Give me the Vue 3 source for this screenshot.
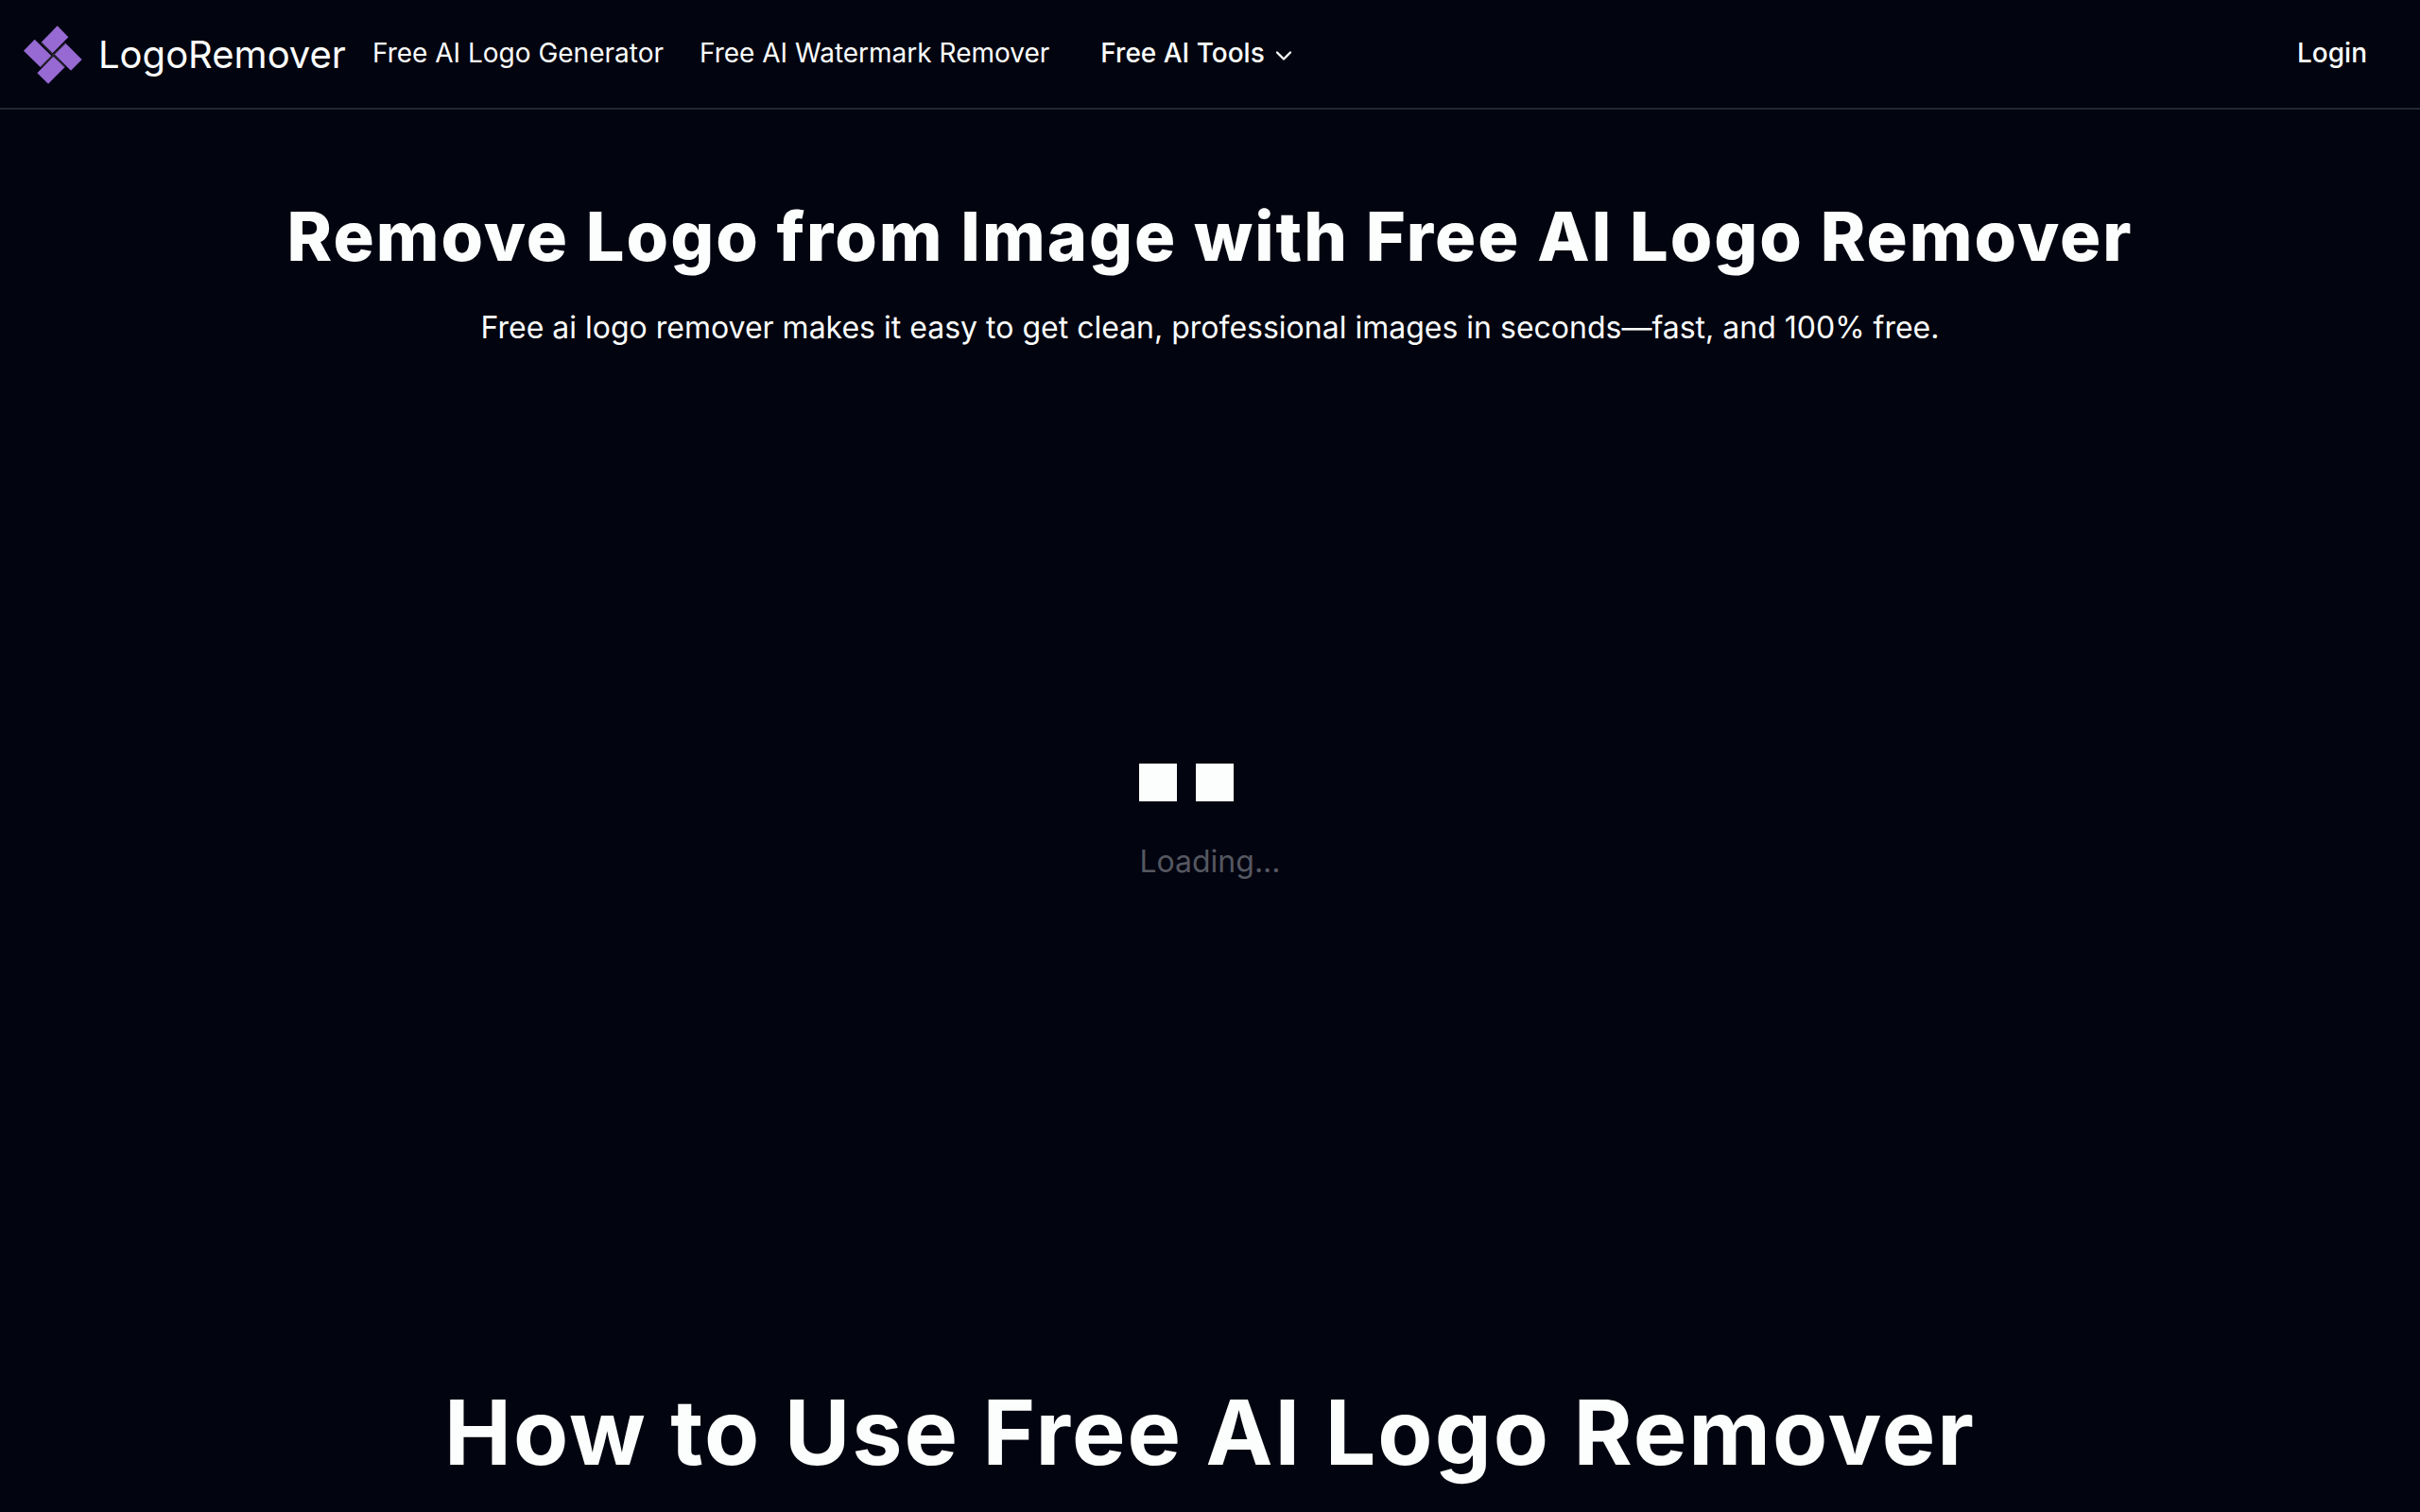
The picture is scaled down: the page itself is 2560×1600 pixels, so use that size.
<script setup>
const links = ['Free AI Logo Generator', 'Free AI Watermark Remover']
</script>

<template>
  <div class="page">
    <header class="bar">
      <a class="brand" href="#">
        <svg class="mark" viewBox="72 75 192 192" aria-hidden="true">
          <g fill="#9669d3">
            <path d="M182 82 217 118 167 169 131 134z" />
            <path d="M110 125 163 177 128 213 75 161z" />
            <path d="M208 137 260 189 225 224 172 172z" />
            <path d="M169 179 206 213 153 266 118 232z" />
          </g>
          <path class="gap" d="M130 134 206 212M208 136 129 214" />
        </svg>
        <span>LogoRemover</span>
      </a>
      <nav class="nav">
        <a v-for="l in links" :key="l" href="#">{{ l }}</a>
        <button class="tools" type="button">Free AI Tools
          <svg class="chev" viewBox="0 0 24 24" aria-hidden="true"><path d="m6 9 6 6 6-6" fill="none" stroke="currentColor" stroke-width="2" stroke-linecap="round" stroke-linejoin="round" /></svg>
        </button>
      </nav>
      <a class="login" href="#">Login</a>
    </header>
    <main>
      <h1>Remove Logo from Image with Free AI Logo Remover</h1>
      <p class="lead">Free ai logo remover makes it easy to get clean, professional images in seconds—fast, and 100% free.</p>
      <section class="stage" role="status">
        <div class="loader">
          <div class="squares"><i></i><i></i></div>
          <span>Loading...</span>
        </div>
      </section>
      <h2>How to Use Free AI Logo Remover</h2>
    </main>
  </div>
</template>

<style>
body { background: #020410; }
</style>
<style scoped>
.page { font-family: Inter, sans-serif; color: #fcfefd; background: #020410; }
.bar { display: flex; align-items: center; height: 114px; padding: 0 56px 0 24px; border-bottom: 2px solid #212833; }
a { color: inherit; text-decoration: none; }
.brand { display: flex; align-items: center; gap: 16px; font-size: 40px; }
.mark { width: 64px; height: 64px; }
.gap { fill: none; stroke: #2f2a35; stroke-width: 4; }
.nav { display: flex; align-items: center; gap: 38px; margin-left: 28px; font-size: 28px; }
.nav, .login { padding-bottom: 2px; }
.tools { display: flex; align-items: center; gap: 6px; margin-left: 16px; padding: 0; border: 0; background: none; color: inherit; font: inherit; font-weight: 500; }
.chev { width: 28px; height: 28px; margin-top: 6px; }
.login { margin-left: auto; font-size: 28px; font-weight: 500; }
main { text-align: center; }
h1 { margin: 94px 0 0; font-size: 72px; line-height: 80px; font-weight: 800; letter-spacing: 2px; }
.lead { margin: 33px 0 0; font-size: 32px; line-height: 48px; }
.stage { display: flex; justify-content: center; padding-top: 437px; height: 648px; }
.loader { text-align: left; font-size: 32px; line-height: 40px; color: #555760; }
.squares { display: flex; gap: 20px; margin-bottom: 44px; }
.squares i { width: 40px; height: 40px; background: #fcfefd; }
h2 { margin: 0; font-size: 95px; line-height: 120px; font-weight: 700; letter-spacing: 2px; }
</style>
